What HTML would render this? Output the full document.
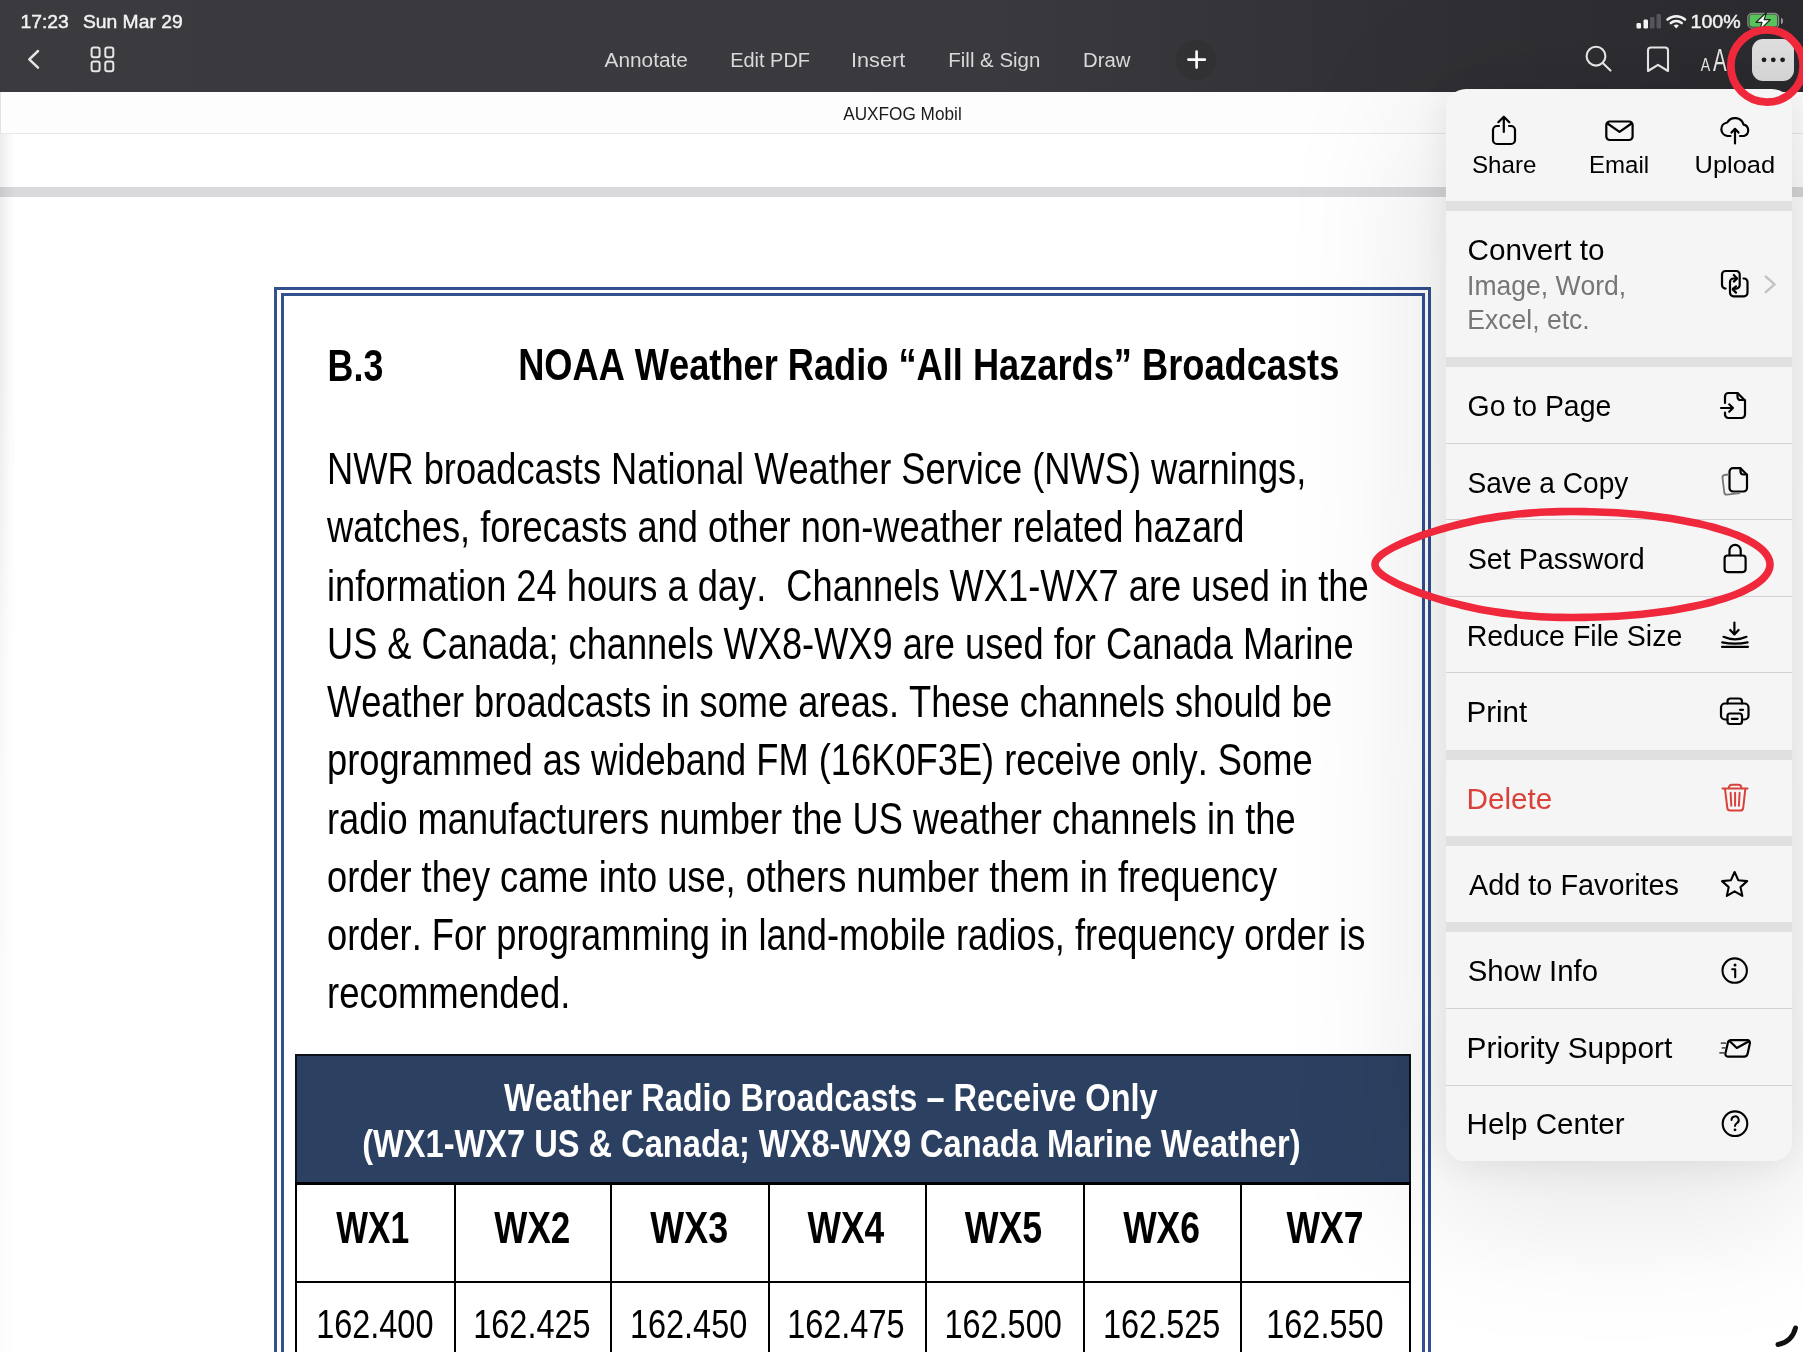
<!DOCTYPE html>
<html><head><meta charset="utf-8"><title>PDF menu</title>
<style>
html,body{margin:0;padding:0;}
body{width:1803px;height:1352px;overflow:hidden;position:relative;background:#fff;
 font-family:"Liberation Sans",sans-serif;}
.a{position:absolute;}
svg{position:absolute;left:0;top:0;will-change:transform;}
text{font-family:"Liberation Sans",sans-serif;font-kerning:none;font-variant-ligatures:none;}
</style></head><body>

<div class="a" style="left:0;top:0;width:1803px;height:92px;background:linear-gradient(90deg,#3b3a3f 0%,#3a393e 55%,#323236 75%,#2b2b2f 100%);"></div>
<div class="a" style="left:0;top:92px;width:1803px;height:41px;background:#fdfdfd;border-bottom:1px solid #e9e9ec;"></div>
<div class="a" style="left:0;top:92px;width:1px;height:42px;background:#e2e2e4;"></div>
<div class="a" style="left:0;top:187px;width:1803px;height:10px;background:#d9d9dc;"></div>
<div class="a" style="left:0;top:134px;width:16px;height:1218px;background:linear-gradient(90deg,rgba(0,0,0,0.075),rgba(0,0,0,0.02) 60%,rgba(0,0,0,0));-webkit-mask-image:linear-gradient(180deg,#000 0%,#000 20%,rgba(0,0,0,0.4) 45%,rgba(0,0,0,0.15) 100%);"></div>
<div class="a" style="left:274px;top:287px;width:1151px;height:1100px;border:3px solid #33508f;"></div>
<div class="a" style="left:281px;top:293px;width:1138px;height:1100px;border:3px solid #33508f;"></div>
<div class="a" style="left:295px;top:1054px;width:1112px;height:128px;background:#2c4061;border:2px solid #0c111a;border-bottom:none;"></div>
<div class="a" style="left:295px;top:1182px;width:1112px;height:200px;border-left:2px solid #000;border-right:2px solid #000;background:#fff;"></div>
<div class="a" style="left:295px;top:1182px;width:1116px;height:3px;background:#000;"></div>
<div class="a" style="left:295px;top:1281px;width:1116px;height:2px;background:#000;"></div>
<div class="a" style="left:454px;top:1184px;width:2px;height:170px;background:#000;"></div>
<div class="a" style="left:610px;top:1184px;width:2px;height:170px;background:#000;"></div>
<div class="a" style="left:768px;top:1184px;width:2px;height:170px;background:#000;"></div>
<div class="a" style="left:925px;top:1184px;width:2px;height:170px;background:#000;"></div>
<div class="a" style="left:1083px;top:1184px;width:2px;height:170px;background:#000;"></div>
<div class="a" style="left:1240px;top:1184px;width:2px;height:170px;background:#000;"></div>
<div class="a" style="left:1446px;top:89px;width:346px;height:1072px;border-radius:20px;box-shadow:0 4px 36px rgba(0,0,0,0.075),0 30px 150px 20px rgba(0,0,0,0.10);"></div>
<div class="a" style="left:1446px;top:89px;width:346px;height:1072px;border-radius:20px;background:#f5f5f5;overflow:hidden;">
<div class="a" style="left:0;top:112px;width:346px;height:10px;background:#e0e0e0;"></div>
<div class="a" style="left:0;top:268px;width:346px;height:10px;background:#e0e0e0;"></div>
<div class="a" style="left:0;top:661px;width:346px;height:10px;background:#e0e0e0;"></div>
<div class="a" style="left:0;top:747px;width:346px;height:10px;background:#e0e0e0;"></div>
<div class="a" style="left:0;top:833px;width:346px;height:10px;background:#e0e0e0;"></div>
<div class="a" style="left:0;top:354px;width:346px;height:1px;background:#d2d2d2;"></div>
<div class="a" style="left:0;top:430px;width:346px;height:1px;background:#d2d2d2;"></div>
<div class="a" style="left:0;top:507px;width:346px;height:1px;background:#d2d2d2;"></div>
<div class="a" style="left:0;top:583px;width:346px;height:1px;background:#d2d2d2;"></div>
<div class="a" style="left:0;top:919px;width:346px;height:1px;background:#d2d2d2;"></div>
<div class="a" style="left:0;top:996px;width:346px;height:1px;background:#d2d2d2;"></div>
</div>
<div class="a" style="left:1752px;top:39px;width:42px;height:42px;border-radius:11px;background:linear-gradient(180deg,#dedede,#d3d3d3);"></div>
<div class="a" style="left:1176px;top:40px;width:40px;height:40px;border-radius:20px;background:rgba(0,0,0,0.07);"></div>
<svg width="1803" height="1352" viewBox="0 0 1803 1352">
<text x="20.53" y="27.70" font-size="18.00" font-weight="400" fill="#f2f2f2" textLength="48.32" lengthAdjust="spacingAndGlyphs" stroke="#f2f2f2" stroke-width="0.45">17:23</text>
<text x="82.92" y="27.70" font-size="18.00" font-weight="400" fill="#f2f2f2" textLength="99.79" lengthAdjust="spacingAndGlyphs" stroke="#f2f2f2" stroke-width="0.45">Sun Mar 29</text>
<text x="1690.51" y="28.00" font-size="19.00" font-weight="400" fill="#f2f2f2" textLength="50.19" lengthAdjust="spacingAndGlyphs" stroke="#f2f2f2" stroke-width="0.45">100%</text>
<rect x="1636.5" y="23.0" width="4.5" height="5.5" rx="1.2" fill="#f2f2f2"/>
<rect x="1643.5" y="19.5" width="4.5" height="9.0" rx="1.2" fill="#f2f2f2"/>
<rect x="1650.0" y="17.0" width="4.5" height="11.5" rx="1.2" fill="#56565a"/>
<rect x="1656.5" y="14.0" width="4.5" height="14.5" rx="1.2" fill="#56565a"/>
<g fill="none" stroke="#f2f2f2" stroke-width="2.6" stroke-linecap="round"><path d="M1667.5,19.5 A13.5,13.5 0 0 1 1685,19.5"/><path d="M1670.8,23 A8.8,8.8 0 0 1 1681.7,23"/></g><path d="M1673.6,25.6 A4.2,4.2 0 0 1 1678.9,25.6 L1676.25,28.4 Z" fill="#f2f2f2"/>
<rect x="1747.9" y="13.5" width="30.6" height="14.6" rx="4.3" fill="#1d2a1d" stroke="#8c8c8c" stroke-width="1.4"/>
<rect x="1749.4" y="14.6" width="27.8" height="12.2" rx="3" fill="#5ac25c"/>
<path d="M1781,18 a2,3 0 0 1 0,6.1 z" fill="#9a9a9a"/>
<path d="M1766.6,12.2 L1756,22.3 L1762,22.3 L1759.6,30.2 L1770.3,19.6 L1764.1,19.6 Z" fill="#fff" stroke="#1a2a1a" stroke-width="1.2" stroke-linejoin="round"/>
<path d="M38,51 L29.3,59.3 L38,67.6" fill="none" stroke="#e6e6e6" stroke-width="2.5" stroke-linecap="round" stroke-linejoin="round"/>
<rect x="91.6" y="47.6" width="8" height="9.6" rx="2.2" fill="none" stroke="#e6e6e6" stroke-width="2"/>
<rect x="105.3" y="47.6" width="8" height="9.6" rx="2.2" fill="none" stroke="#e6e6e6" stroke-width="2"/>
<rect x="91.6" y="61.6" width="8" height="9.6" rx="2.2" fill="none" stroke="#e6e6e6" stroke-width="2"/>
<rect x="105.3" y="61.6" width="8" height="9.6" rx="2.2" fill="none" stroke="#e6e6e6" stroke-width="2"/>
<text x="604.56" y="66.60" font-size="19.50" font-weight="400" fill="#d9d9db" textLength="83.37" lengthAdjust="spacingAndGlyphs">Annotate</text>
<text x="730.16" y="66.60" font-size="19.50" font-weight="400" fill="#d9d9db" textLength="79.84" lengthAdjust="spacingAndGlyphs">Edit PDF</text>
<text x="851.00" y="66.60" font-size="19.50" font-weight="400" fill="#d9d9db" textLength="54.16" lengthAdjust="spacingAndGlyphs">Insert</text>
<text x="948.32" y="66.60" font-size="19.50" font-weight="400" fill="#d9d9db" textLength="92.00" lengthAdjust="spacingAndGlyphs">Fill &amp; Sign</text>
<text x="1083.03" y="66.60" font-size="19.50" font-weight="400" fill="#d9d9db" textLength="47.42" lengthAdjust="spacingAndGlyphs">Draw</text>
<path d="M1196.6,51.5 V67.6 M1188.4,59.6 H1204.9" stroke="#fff" stroke-width="2.6" stroke-linecap="round"/>
<g fill="none" stroke="#e3e3e3" stroke-width="2.1" stroke-linecap="round" stroke-linejoin="round">
<circle cx="1596" cy="56.2" r="9.4"/><path d="M1603,63.2 L1610.5,70.6"/>
<path d="M1648,50.5 a3,3 0 0 1 3,-3 h14 a3,3 0 0 1 3,3 v20.5 l-10,-6.2 l-10,6.2 z"/>
</g>
<text x="1700.77" y="71.00" font-size="17.50" font-weight="400" fill="#e3e3e3" textLength="9.46" lengthAdjust="spacingAndGlyphs">A</text>
<text x="1712.96" y="71.00" font-size="31.00" font-weight="400" fill="#e3e3e3" textLength="13.68" lengthAdjust="spacingAndGlyphs">A</text>
<circle cx="1764.0" cy="59.8" r="2.4" fill="#1c1c1e"/>
<circle cx="1773.3" cy="59.8" r="2.4" fill="#1c1c1e"/>
<circle cx="1782.6" cy="59.8" r="2.4" fill="#1c1c1e"/>
<text x="843.17" y="119.70" font-size="18.00" font-weight="400" fill="#1b1b1b" textLength="118.58" lengthAdjust="spacingAndGlyphs">AUXFOG Mobil</text>
<text x="327.61" y="380.50" font-size="44.00" font-weight="700" fill="#000" textLength="55.69" lengthAdjust="spacingAndGlyphs">B.3</text>
<text x="518.18" y="380.30" font-size="44.00" font-weight="700" fill="#000" textLength="821.11" lengthAdjust="spacingAndGlyphs">NOAA Weather Radio “All Hazards” Broadcasts</text>
<text x="327.00" y="484.00" font-size="44.00" font-weight="400" fill="#000" textLength="979.26" lengthAdjust="spacingAndGlyphs" xml:space="preserve">NWR broadcasts National Weather Service (NWS) warnings,</text>
<text x="327.00" y="542.25" font-size="44.00" font-weight="400" fill="#000" textLength="917.34" lengthAdjust="spacingAndGlyphs" xml:space="preserve">watches, forecasts and other non-weather related hazard</text>
<text x="327.00" y="600.50" font-size="44.00" font-weight="400" fill="#000" textLength="1041.61" lengthAdjust="spacingAndGlyphs" xml:space="preserve">information 24 hours a day.  Channels WX1-WX7 are used in the</text>
<text x="327.00" y="658.75" font-size="44.00" font-weight="400" fill="#000" textLength="1026.61" lengthAdjust="spacingAndGlyphs" xml:space="preserve">US &amp; Canada; channels WX8-WX9 are used for Canada Marine</text>
<text x="327.00" y="717.00" font-size="44.00" font-weight="400" fill="#000" textLength="1005.11" lengthAdjust="spacingAndGlyphs" xml:space="preserve">Weather broadcasts in some areas. These channels should be</text>
<text x="327.00" y="775.25" font-size="44.00" font-weight="400" fill="#000" textLength="985.61" lengthAdjust="spacingAndGlyphs" xml:space="preserve">programmed as wideband FM (16K0F3E) receive only. Some</text>
<text x="327.00" y="833.50" font-size="44.00" font-weight="400" fill="#000" textLength="968.61" lengthAdjust="spacingAndGlyphs" xml:space="preserve">radio manufacturers number the US weather channels in the</text>
<text x="327.00" y="891.75" font-size="44.00" font-weight="400" fill="#000" textLength="950.07" lengthAdjust="spacingAndGlyphs" xml:space="preserve">order they came into use, others number them in frequency</text>
<text x="327.00" y="950.00" font-size="44.00" font-weight="400" fill="#000" textLength="1038.31" lengthAdjust="spacingAndGlyphs" xml:space="preserve">order. For programming in land-mobile radios, frequency order is</text>
<text x="327.00" y="1008.25" font-size="44.00" font-weight="400" fill="#000" textLength="243.33" lengthAdjust="spacingAndGlyphs" xml:space="preserve">recommended.</text>
<text x="503.97" y="1111.00" font-size="39.00" font-weight="700" fill="#fff" textLength="653.61" lengthAdjust="spacingAndGlyphs">Weather Radio Broadcasts – Receive Only</text>
<text x="362.18" y="1156.60" font-size="39.00" font-weight="700" fill="#fff" textLength="938.35" lengthAdjust="spacingAndGlyphs">(WX1-WX7 US &amp; Canada; WX8-WX9 Canada Marine Weather)</text>
<text x="336.37" y="1243.00" font-size="45.00" font-weight="700" fill="#000" textLength="72.87" lengthAdjust="spacingAndGlyphs">WX1</text>
<text x="316.13" y="1338.00" font-size="40.00" font-weight="400" fill="#000" textLength="117.34" lengthAdjust="spacingAndGlyphs">162.400</text>
<text x="494.37" y="1243.00" font-size="45.00" font-weight="700" fill="#000" textLength="75.94" lengthAdjust="spacingAndGlyphs">WX2</text>
<text x="473.23" y="1338.00" font-size="40.00" font-weight="400" fill="#000" textLength="117.44" lengthAdjust="spacingAndGlyphs">162.425</text>
<text x="650.36" y="1243.00" font-size="45.00" font-weight="700" fill="#000" textLength="77.73" lengthAdjust="spacingAndGlyphs">WX3</text>
<text x="629.93" y="1338.00" font-size="40.00" font-weight="400" fill="#000" textLength="117.34" lengthAdjust="spacingAndGlyphs">162.450</text>
<text x="807.57" y="1243.00" font-size="45.00" font-weight="700" fill="#000" textLength="76.62" lengthAdjust="spacingAndGlyphs">WX4</text>
<text x="787.13" y="1338.00" font-size="40.00" font-weight="400" fill="#000" textLength="117.44" lengthAdjust="spacingAndGlyphs">162.475</text>
<text x="964.77" y="1243.00" font-size="45.00" font-weight="700" fill="#000" textLength="77.43" lengthAdjust="spacingAndGlyphs">WX5</text>
<text x="944.43" y="1338.00" font-size="40.00" font-weight="400" fill="#000" textLength="117.34" lengthAdjust="spacingAndGlyphs">162.500</text>
<text x="1123.17" y="1243.00" font-size="45.00" font-weight="700" fill="#000" textLength="76.71" lengthAdjust="spacingAndGlyphs">WX6</text>
<text x="1102.93" y="1338.00" font-size="40.00" font-weight="400" fill="#000" textLength="117.44" lengthAdjust="spacingAndGlyphs">162.525</text>
<text x="1286.47" y="1243.00" font-size="45.00" font-weight="700" fill="#000" textLength="77.00" lengthAdjust="spacingAndGlyphs">WX7</text>
<text x="1266.23" y="1338.00" font-size="40.00" font-weight="400" fill="#000" textLength="117.34" lengthAdjust="spacingAndGlyphs">162.550</text>
<text x="1471.90" y="172.70" font-size="24.50" font-weight="400" fill="#000" textLength="64.57" lengthAdjust="spacingAndGlyphs">Share</text>
<text x="1589.03" y="172.70" font-size="24.50" font-weight="400" fill="#000" textLength="60.08" lengthAdjust="spacingAndGlyphs">Email</text>
<text x="1694.54" y="173.00" font-size="24.50" font-weight="400" fill="#000" textLength="80.60" lengthAdjust="spacingAndGlyphs">Upload</text>
<text x="1467.49" y="260.00" font-size="30.00" font-weight="400" fill="#000" textLength="136.95" lengthAdjust="spacingAndGlyphs">Convert to</text>
<text x="1467.05" y="295.00" font-size="27.50" font-weight="400" fill="#767676" textLength="159.03" lengthAdjust="spacingAndGlyphs">Image, Word,</text>
<text x="1467.33" y="329.30" font-size="27.50" font-weight="400" fill="#767676" textLength="122.30" lengthAdjust="spacingAndGlyphs">Excel, etc.</text>
<text x="1467.57" y="416.00" font-size="30.00" font-weight="400" fill="#000" textLength="143.69" lengthAdjust="spacingAndGlyphs">Go to Page</text>
<text x="1467.70" y="569.40" font-size="30.00" font-weight="400" fill="#000" textLength="176.95" lengthAdjust="spacingAndGlyphs">Set Password</text>
<text x="1466.66" y="645.50" font-size="30.00" font-weight="400" fill="#000" textLength="215.61" lengthAdjust="spacingAndGlyphs">Reduce File Size</text>
<text x="1466.58" y="722.00" font-size="30.00" font-weight="400" fill="#000" textLength="60.64" lengthAdjust="spacingAndGlyphs">Print</text>
<text x="1466.57" y="808.50" font-size="30.00" font-weight="400" fill="#d8423a" textLength="85.75" lengthAdjust="spacingAndGlyphs">Delete</text>
<text x="1468.94" y="895.00" font-size="30.00" font-weight="400" fill="#000" textLength="210.10" lengthAdjust="spacingAndGlyphs">Add to Favorites</text>
<text x="1467.67" y="981.00" font-size="30.00" font-weight="400" fill="#000" textLength="130.36" lengthAdjust="spacingAndGlyphs">Show Info</text>
<text x="1466.55" y="1057.50" font-size="30.00" font-weight="400" fill="#000" textLength="205.67" lengthAdjust="spacingAndGlyphs">Priority Support</text>
<text x="1466.57" y="1134.40" font-size="30.00" font-weight="400" fill="#000" textLength="157.92" lengthAdjust="spacingAndGlyphs">Help Center</text>
<text x="1467.52" y="492.50" font-size="30.00" font-weight="400" fill="#000" textLength="160.83" lengthAdjust="spacingAndGlyphs">Save a Copy</text>
<g fill="none" stroke="#000" stroke-width="2.2" stroke-linecap="round" stroke-linejoin="round">
<path d="M1503.8,117 V132 M1498.3,122.2 L1503.8,116.7 L1509.3,122.2"/>
<path d="M1499,126 H1497 a4,4 0 0 0 -4,4 V140 a4,4 0 0 0 4,4 H1511 a4,4 0 0 0 4,-4 V130 a4,4 0 0 0 -4,-4 H1509"/>
<rect x="1606.3" y="121.5" width="26.3" height="18.5" rx="3.5"/><path d="M1607.5,123.5 L1619.5,131.8 L1631.5,123.5"/>
<path d="M1730.5,136 H1727.5 A6.8,6.8 0 0 1 1727.2,122.5 A9,9 0 0 1 1743.6,124.6 A5.9,5.9 0 0 1 1744,136 H1740"/>
<path d="M1735,143.5 V129.2 M1731.5,132.6 L1735,128.8 L1738.5,132.6"/>
<path d="M1725.6,288.6 H1725.5 a3.5,3.5 0 0 1 -3.5,-3.5 V274.5 a3.5,3.5 0 0 1 3.5,-3.5 H1736.2 a3.5,3.5 0 0 1 3.5,3.5 V285.1 a3.5,3.5 0 0 1 -3.5,3.5 H1733"/>
<path d="M1736,286.3 L1732.8,289.4 L1736,292.6"/>
<path d="M1743.5,278.5 H1744 a3.5,3.5 0 0 1 3.5,3.5 V292.8 a3.5,3.5 0 0 1 -3.5,3.5 H1733.5 a3.5,3.5 0 0 1 -3.5,-3.5 V282 a3.5,3.5 0 0 1 3.5,-3.5 H1736.8"/>
<path d="M1733.8,275 L1737.1,278.4 L1733.8,281.6"/>
</g>
<path d="M1765.8,276.6 L1774.6,284.4 L1765.8,292.2" fill="none" stroke="#c2c2c2" stroke-width="2.4" stroke-linecap="round" stroke-linejoin="round"/>
<g fill="none" stroke="#000" stroke-width="2.2" stroke-linecap="round" stroke-linejoin="round">
<path d="M1725,403 V396.5 a3.5,3.5 0 0 1 3.5,-3.5 H1737.5 L1745,400.5 V414.5 a3.5,3.5 0 0 1 -3.5,3.5 H1728.5 a3.5,3.5 0 0 1 -3.5,-3.5 V412.5"/>
<path d="M1737.5,393.2 V397 a3,3 0 0 0 3,3 H1744.8"/>
<path d="M1721,408 H1733 M1729.2,404.3 L1733,408 L1729.2,411.7"/>
<path d="M1733,468.2 H1740.5 L1747,474.7 V488 a3.5,3.5 0 0 1 -3.5,3.5 H1733 a3.5,3.5 0 0 1 -3.5,-3.5 V471.7 a3.5,3.5 0 0 1 3.5,-3.5 Z"/>
<path d="M1740.5,468.4 V471.5 a3,3 0 0 0 3,3 H1746.8"/>
</g>
<path d="M1728.2,474.5 L1724.6,475 a2.5,2.5 0 0 0 -2.1,2.8 L1724.3,492.5 a2.5,2.5 0 0 0 2.8,2.1 L1739.5,493.2" fill="none" stroke="#777" stroke-width="1.8" stroke-linecap="round" stroke-linejoin="round"/>
<g fill="none" stroke="#000" stroke-width="2.2" stroke-linecap="round" stroke-linejoin="round">
<path d="M1729.5,555.5 V550.5 a5.6,5.6 0 0 1 11.2,0 V555.5"/>
<rect x="1724.6" y="555.5" width="21" height="16.6" rx="3"/>
<path d="M1734.4,622.5 V634 M1730.2,630 L1734.4,634.4 L1738.6,630"/>
<path d="M1723.5,636.8 Q1735,642 1746.5,636.8 M1722.2,642.4 Q1735,645 1747.6,642.4 M1722,646.8 H1748"/>
<path d="M1727.5,703.5 V701.5 a3,3 0 0 1 3,-3 H1739 a3,3 0 0 1 3,3 V703.5"/>
<path d="M1727.5,719.5 H1725 a4,4 0 0 1 -4,-4 V707.5 a4,4 0 0 1 4,-4 H1744.5 a4,4 0 0 1 4,4 V715.5 a4,4 0 0 1 -4,4 H1742"/>
<rect x="1727.5" y="713.5" width="14.5" height="10.5" rx="2.5"/>
<path d="M1740,709.8 H1743 M1731.8,718.8 H1737.6"/>
</g>
<g fill="none" stroke="#d8423a" stroke-width="2" stroke-linecap="round" stroke-linejoin="round"><path d="M1722.5,788.5 H1747.5 M1729,788.3 V787.5 a2.8,2.8 0 0 1 2.8,-2.8 H1738.5 a2.8,2.8 0 0 1 2.8,2.8 V788.3"/><path d="M1725,789 L1727.3,807.8 a3,3 0 0 0 3,2.7 H1740.2 a3,3 0 0 0 3,-2.7 L1745.3,789"/><path d="M1730.6,792.8 L1731.3,805.8 M1735.1,792.8 V805.8 M1739.6,792.8 L1738.9,805.8"/></g>
<g fill="none" stroke="#000" stroke-width="2.1" stroke-linecap="round" stroke-linejoin="round">
<path d="M1734.60,872.00 L1738.24,880.18 L1747.15,881.12 L1740.50,887.12 L1742.36,895.88 L1734.60,891.40 L1726.84,895.88 L1728.70,887.12 L1722.05,881.12 L1730.96,880.18 Z"/>
<circle cx="1734.7" cy="970.6" r="12.2"/><path d="M1732.2,969.2 H1735.2 V977.2"/>
</g>
<circle cx="1735" cy="965" r="1.5" fill="#000"/>
<g fill="none" stroke="#000" stroke-width="2.2" stroke-linecap="round" stroke-linejoin="round"><path d="M1731.3,1040.2 H1747.5 a2.5,2.5 0 0 1 2.4,3 L1747.6,1053.8 a3.5,3.5 0 0 1 -3.4,2.8 H1727.8 a2.5,2.5 0 0 1 -2.4,-3 L1727.8,1043 a3.5,3.5 0 0 1 3.5,-2.8 Z"/><path d="M1729.8,1041.3 L1736.8,1048 L1749,1041.3"/></g>
<path d="M1721.5,1043.2 H1725.3 M1722.5,1047.9 H1725 M1720,1052.8 H1724.3" stroke="#555" stroke-width="1.8" stroke-linecap="round"/>
<circle cx="1735" cy="1123.7" r="12.3" fill="none" stroke="#000" stroke-width="2.1"/>
<path d="M1731.5,1120 a3.6,3.6 0 1 1 5.4,3.1 c-1.3,0.8 -1.9,1.5 -1.9,3" fill="none" stroke="#000" stroke-width="2" stroke-linecap="round"/>
<circle cx="1735" cy="1129.8" r="1.4" fill="#000"/>
<path d="M1778,1344.5 Q1792,1342 1795.5,1328" fill="none" stroke="#111" stroke-width="5" stroke-linecap="round"/>
<circle cx="1767" cy="66" r="36.2" fill="none" stroke="#f0283c" stroke-width="7.8"/>
<path d="M1770.00,564.50 C1770.00,565.66 1769.86,566.81 1769.58,567.97 C1769.30,569.12 1768.87,570.27 1768.31,571.42 C1767.75,572.56 1767.05,573.71 1766.21,574.84 C1765.37,575.97 1764.38,577.10 1763.27,578.22 C1762.16,579.33 1760.90,580.44 1759.52,581.54 C1758.13,582.63 1756.61,583.71 1754.97,584.78 C1753.32,585.85 1751.54,586.91 1749.63,587.94 C1747.73,588.98 1745.69,590.00 1743.54,591.00 C1741.39,592.00 1739.11,592.98 1736.72,593.95 C1734.32,594.91 1731.81,595.85 1729.19,596.76 C1726.57,597.68 1723.83,598.58 1720.99,599.45 C1718.15,600.31 1715.20,601.16 1712.15,601.98 C1709.11,602.79 1705.96,603.59 1702.72,604.35 C1699.48,605.11 1696.15,605.84 1692.73,606.55 C1689.31,607.25 1685.81,607.93 1682.23,608.57 C1678.65,609.21 1674.98,609.82 1671.25,610.40 C1667.52,610.98 1663.71,611.52 1659.85,612.03 C1655.99,612.55 1652.06,613.02 1648.08,613.47 C1644.10,613.91 1640.06,614.32 1635.98,614.69 C1631.91,615.06 1627.78,615.40 1623.62,615.69 C1619.46,615.99 1615.25,616.26 1611.03,616.48 C1606.81,616.71 1602.55,616.90 1598.28,617.05 C1594.01,617.20 1589.71,617.31 1585.42,617.39 C1581.12,617.46 1576.81,617.50 1572.50,617.50 C1568.19,617.50 1563.88,617.46 1559.58,617.37 C1555.29,617.28 1550.99,617.14 1546.72,616.95 C1542.45,616.76 1538.19,616.52 1533.97,616.22 C1529.75,615.92 1525.54,615.57 1521.38,615.17 C1517.22,614.77 1513.09,614.31 1509.02,613.81 C1504.94,613.30 1500.90,612.74 1496.92,612.13 C1492.94,611.53 1489.01,610.87 1485.15,610.18 C1481.29,609.48 1477.48,608.74 1473.75,607.97 C1470.02,607.19 1466.35,606.37 1462.77,605.53 C1459.19,604.68 1455.69,603.80 1452.27,602.90 C1448.85,602.00 1445.52,601.07 1442.28,600.13 C1439.04,599.19 1435.89,598.22 1432.85,597.25 C1429.80,596.28 1426.85,595.29 1424.01,594.31 C1421.17,593.32 1418.43,592.33 1415.81,591.34 C1413.19,590.35 1410.68,589.36 1408.28,588.38 C1405.89,587.40 1403.61,586.42 1401.46,585.45 C1399.31,584.49 1397.27,583.53 1395.37,582.58 C1393.46,581.64 1391.68,580.71 1390.03,579.79 C1388.39,578.87 1386.87,577.97 1385.48,577.08 C1384.10,576.19 1382.84,575.31 1381.73,574.44 C1380.62,573.58 1379.63,572.73 1378.79,571.88 C1377.95,571.04 1377.25,570.21 1376.69,569.39 C1376.13,568.56 1375.70,567.75 1375.42,566.93 C1375.14,566.12 1375.00,565.31 1375.00,564.50 C1375.00,563.69 1375.14,562.88 1375.42,562.07 C1375.70,561.25 1376.13,560.44 1376.69,559.61 C1377.25,558.79 1377.95,557.96 1378.79,557.12 C1379.63,556.27 1380.62,555.42 1381.73,554.56 C1382.84,553.69 1384.10,552.81 1385.48,551.92 C1386.87,551.03 1388.39,550.13 1390.03,549.21 C1391.68,548.29 1393.46,547.36 1395.37,546.42 C1397.27,545.47 1399.31,544.51 1401.46,543.55 C1403.61,542.58 1405.89,541.60 1408.28,540.62 C1410.68,539.64 1413.19,538.65 1415.81,537.66 C1418.43,536.67 1421.17,535.68 1424.01,534.69 C1426.85,533.71 1429.80,532.72 1432.85,531.75 C1435.89,530.78 1439.04,529.81 1442.28,528.87 C1445.52,527.93 1448.85,527.00 1452.27,526.10 C1455.69,525.20 1459.19,524.32 1462.77,523.47 C1466.35,522.63 1470.02,521.81 1473.75,521.03 C1477.48,520.26 1481.29,519.52 1485.15,518.82 C1489.01,518.13 1492.94,517.47 1496.92,516.87 C1500.90,516.26 1504.94,515.70 1509.02,515.19 C1513.09,514.69 1517.22,514.23 1521.38,513.83 C1525.54,513.43 1529.75,513.08 1533.97,512.78 C1538.19,512.48 1542.45,512.24 1546.72,512.05 C1550.99,511.86 1555.29,511.72 1559.58,511.63 C1563.88,511.54 1568.19,511.50 1572.50,511.50 C1576.81,511.50 1581.12,511.54 1585.42,511.61 C1589.71,511.69 1594.01,511.80 1598.28,511.95 C1602.55,512.10 1606.81,512.29 1611.03,512.52 C1615.25,512.74 1619.46,513.01 1623.62,513.31 C1627.78,513.60 1631.91,513.94 1635.98,514.31 C1640.06,514.68 1644.10,515.09 1648.08,515.53 C1652.06,515.98 1655.99,516.45 1659.85,516.97 C1663.71,517.48 1667.52,518.02 1671.25,518.60 C1674.98,519.18 1678.65,519.79 1682.23,520.43 C1685.81,521.07 1689.31,521.75 1692.73,522.45 C1696.15,523.16 1699.48,523.89 1702.72,524.65 C1705.96,525.41 1709.11,526.21 1712.15,527.02 C1715.20,527.84 1718.15,528.69 1720.99,529.55 C1723.83,530.42 1726.57,531.32 1729.19,532.24 C1731.81,533.15 1734.32,534.09 1736.72,535.05 C1739.11,536.02 1741.39,537.00 1743.54,538.00 C1745.69,539.00 1747.73,540.02 1749.63,541.06 C1751.54,542.09 1753.32,543.15 1754.97,544.22 C1756.61,545.29 1758.13,546.37 1759.52,547.46 C1760.90,548.56 1762.16,549.67 1763.27,550.78 C1764.38,551.90 1765.37,553.03 1766.21,554.16 C1767.05,555.29 1767.75,556.44 1768.31,557.58 C1768.87,558.73 1769.30,559.88 1769.58,561.03 C1769.86,562.19 1770.00,563.34 1770.00,564.50 Z" fill="none" stroke="#f0283c" stroke-width="7.6"/>
</svg>
</body></html>
